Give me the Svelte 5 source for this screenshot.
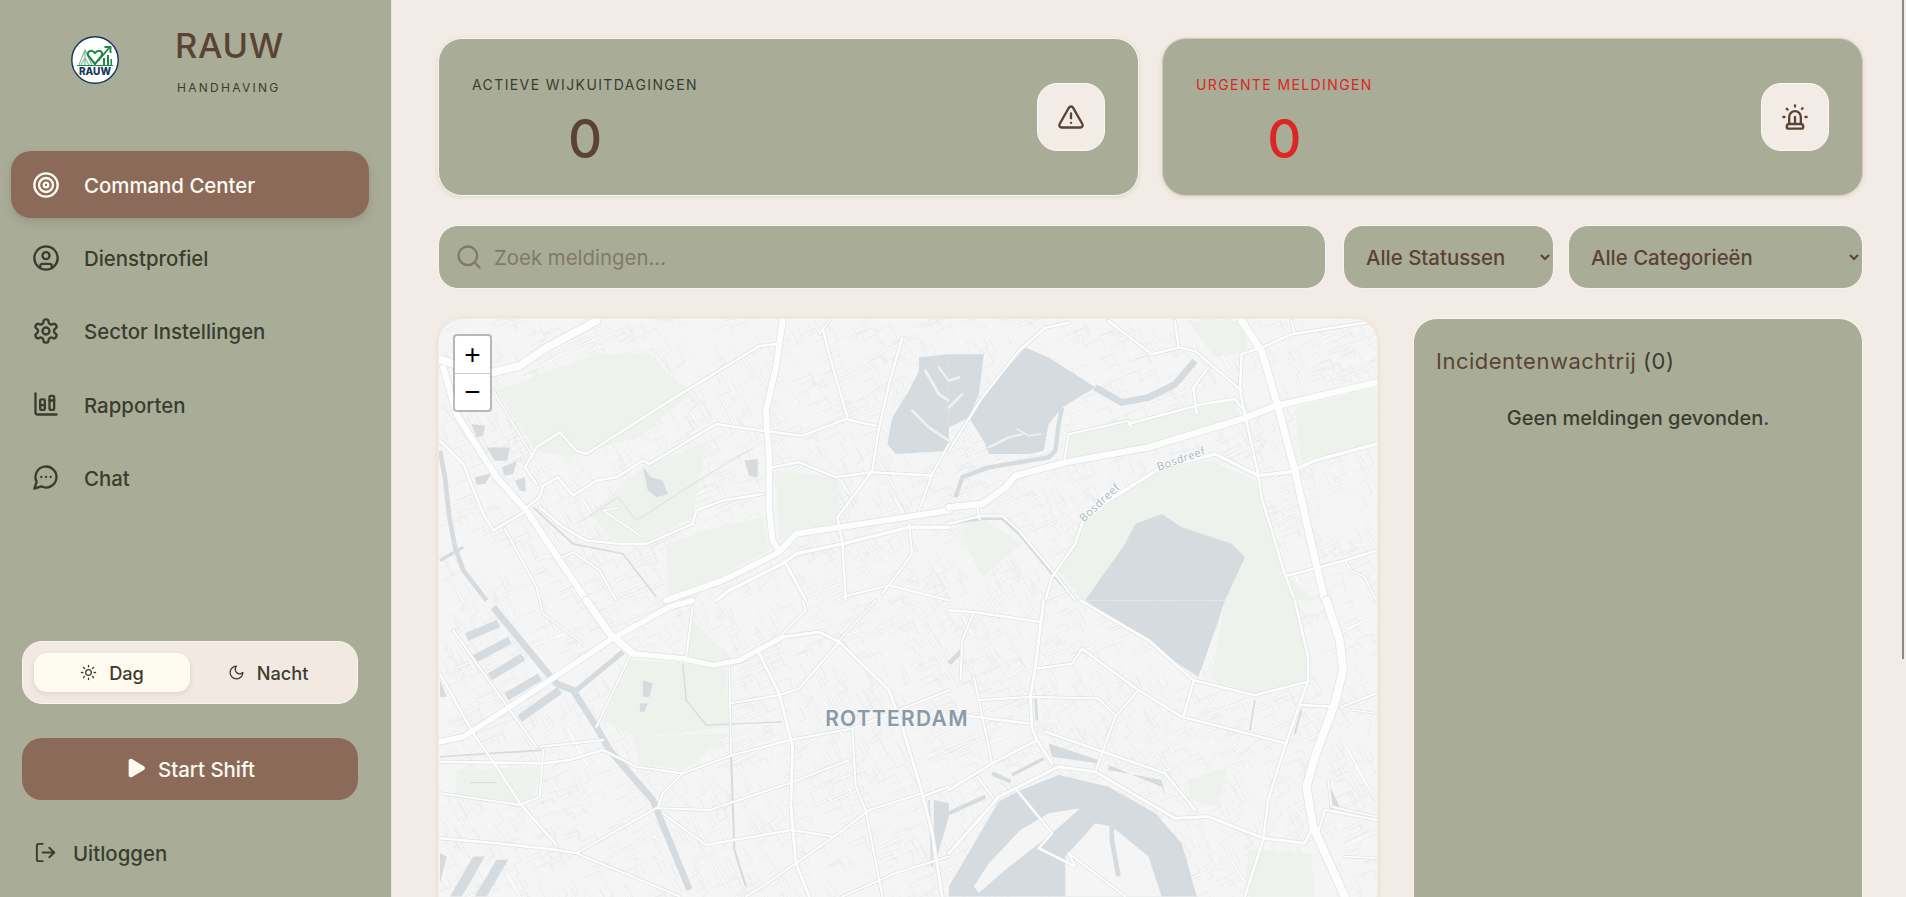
<script>
  const navItems = [
    { label: "Command Center", icon: "target", active: true },
    { label: "Dienstprofiel", icon: "user" },
    { label: "Sector Instellingen", icon: "gear" },
    { label: "Rapporten", icon: "chart" },
    { label: "Chat", icon: "chat" }
  ];

  // map features, traced per tile of the city; numbers are tile px (3x page px)
  const tiles = [
    {
      x: 430, y: 310,
      park: [
        "200,240 500,130 660,130 780,250 640,370 420,440 320,420",
        "480,610 640,470 830,395 790,620 650,690 560,690",
        "1040,480 1230,500 1225,640 1050,690",
        "710,700 830,660 1000,620 1020,720 820,820 800,870 720,870"
      ],
      water: [
        "1470,140 1560,130 1560,420 1400,430 1375,400 1390,320 1440,240 1470,180",
        "125,340 165,345 160,375 140,380",
        "170,410 240,410 232,450 195,450",
        "215,470 260,452 250,490 225,495",
        "135,500 185,488 165,520 140,522",
        "255,510 285,500 288,542 270,540",
        "640,470 665,500 700,510 715,550 680,560 655,540",
        "945,450 985,445 985,500 960,495"
      ],
      shore: [
        ["1490,180 1530,250 1560,270", 9],
        ["1450,300 1500,350 1560,390", 8],
        ["1530,170 1560,210", 7]
      ],
      ditch: [
        ["30,420 45,500 58,620 75,710 100,780 170,870", 14],
        ["30,750 100,710", 10],
        ["310,590 430,700 580,730 680,860", 5],
        ["975,410 830,495 620,630 565,560 460,630", 2.5]
      ],
      roads: [
        ["30,145 100,170 190,185 270,165 350,110 500,30", 18],
        ["40,170 80,310 200,500 290,600 470,870", 15],
        ["1060,30 1040,170 1010,300 1020,450 1020,600 1030,690 1050,720", 14],
        ["1560,600 1300,640 1100,670 1050,725 880,810 710,870", 14],
        ["1560,650 1440,650 1240,700 1100,730 1060,760 900,840 860,870", 8],
        ["1040,100 990,105 950,130 720,270 470,430 440,420 390,365 320,410 285,470 320,520", 6],
        ["860,340 1000,360 1120,375 1250,325 1340,345", 6],
        ["860,340 660,460 640,450 560,500 500,510 430,555 385,500 340,525 330,560 290,590", 6],
        ["1030,470 1110,455 1220,500 1325,485 1510,495", 6],
        ["1180,50 1200,130 1255,320", 6],
        ["1420,80 1380,220 1350,350 1330,480 1225,620 1240,700 1250,870", 6],
        ["1065,750 1130,870", 7],
        ["1440,640 1450,730 1360,850", 5],
        ["1470,600 1510,490 1560,400", 5],
        ["1000,550 880,570 800,600 790,640 650,700 570,700 470,690 400,650 330,590", 6],
        ["290,600 190,660 160,610 100,460 30,390", 6],
        ["225,655 320,830 330,870", 5],
        ["400,740 430,725 510,780 560,870", 5],
        ["190,240 310,440", 4],
        ["570,590 520,600 640,680", 4],
        ["1170,70 1200,30", 4],
        ["1240,860 1380,825 1560,870", 5]
      ]
    },
    {
      x: 950, y: 310,
      park: [
        "400,640 620,480 790,450 920,510 1010,790 1100,870 400,870 330,780 380,700",
        "720,30 880,30 900,120 800,140",
        "360,370 760,290 860,270 880,330 620,420 350,450",
        "1040,290 1285,230 1285,400 1060,450",
        "30,660 90,620 220,700 100,800"
      ],
      water: [
        "0,130 105,130 100,170 90,250 60,320 0,350",
        "230,110 300,140 440,230 340,290 300,340 285,420 240,430 120,430 110,400 60,320 100,260 140,210",
        "640,610 700,650 850,700 890,740 830,870 410,870 530,700 560,640"
      ],
      shore: [
        ["0,210 30,200", 8],
        ["0,290 40,250", 8],
        ["120,410 180,380 220,370", 7],
        ["205,355 240,375 275,370", 5],
        ["60,90 110,130", 6]
      ],
      ditch: [
        ["440,230 520,275 600,260 680,220 740,150", 20],
        ["340,290 330,340 320,420 300,440 120,470 40,500 20,560", 13],
        ["0,640 100,625 160,625 210,670 310,790 380,870", 7],
        ["940,560 1010,790", 3]
      ],
      roads: [
        ["0,590 100,580 170,530 200,495 350,455 600,410 880,325 985,285 1285,215", 15],
        ["880,30 940,120 990,290 1040,480 1090,700 1130,870", 17],
        ["400,640 430,600 640,470 800,430 860,460 930,495 1020,485 1100,450 1285,400", 8],
        ["890,310 930,490 940,560 1010,790 1040,870", 6],
        ["1285,30 1030,70 940,110 880,130 875,240 890,310", 6],
        ["540,340 760,280 860,265 880,290", 6],
        ["360,370 540,330 550,350", 5],
        ["360,370 345,460", 5],
        ["480,30 610,130 690,110 740,120 880,240", 6],
        ["780,170 735,230 745,310", 6],
        ["210,120 290,50 360,35", 6],
        ["210,120 100,260 0,420", 5],
        ["400,640 380,700 310,800 290,870", 6],
        ["0,640 100,615 160,615 210,660 310,780 380,870", 5],
        ["1285,720 1190,750 1020,795", 6],
        ["1190,750 1210,780 1250,800 1285,870", 4],
        ["85,590 92,625", 5],
        ["680,30 690,110", 5],
        ["1030,30 1040,70", 5]
      ]
    },
    {
      x: 430, y: 600,
      park: [
        "520,360 600,180 770,190 890,205 900,380 620,410",
        "780,50 920,190 840,190 770,170",
        "80,510 330,500 310,610 75,590",
        "610,410 900,400 760,510 630,490"
      ],
      water: [
        "30,760 50,770 30,850",
        "60,890 130,770 165,770 95,890",
        "135,890 200,780 235,780 170,890",
        "1515,600 1560,610 1560,650 1525,770 1515,700",
        "30,240 50,290 30,290",
        "640,240 670,250 660,290 640,290",
        "630,310 655,310 645,335 632,335"
      ],
      ditch: [
        ["190,20 350,215 380,250 430,270 500,380 540,450 600,520 670,600 690,650 780,870", 20],
        ["110,110 205,70", 24],
        ["135,175 240,120", 24],
        ["180,230 280,170", 24],
        ["230,290 330,230", 24],
        ["270,355 390,270", 24],
        ["440,270 580,155", 15],
        ["900,200 905,460 915,750 950,860", 6],
        ["760,190 770,300 830,375 1060,365", 4],
        ["120,548 200,548", 3],
        ["30,470 340,450", 5],
        ["1500,600 1510,800", 5]
      ],
      roads: [
        ["470,0 540,100 610,160", 17],
        ["610,160 760,175 850,195 930,180 1060,110", 12],
        ["1060,110 1170,95 1230,125 1380,270 1420,380 1480,580 1510,700 1540,890", 7],
        ["30,425 100,410 240,320 540,120 720,20 790,0", 13],
        ["30,220 130,400 200,500 270,610 380,735", 6],
        ["70,90 240,330 320,440", 5],
        ["30,580 270,615 330,590 340,450", 5],
        ["30,485 340,490 420,480 520,450", 6],
        ["330,440 520,420", 5],
        ["520,450 620,500 760,520 910,465 1080,420 1270,385 1560,270", 5],
        ["760,520 700,580 685,625", 5],
        ["30,715 200,730 380,750", 6],
        ["380,750 440,760 680,625", 5],
        ["685,625 840,630 1080,550 1260,480", 5],
        ["700,640 830,735 1090,690 1210,710", 5],
        ["440,760 680,860 750,890", 5],
        ["985,150 1050,280 1090,440 1085,620 1100,790 1140,890", 7],
        ["900,310 1050,285 1110,265 1230,125", 5],
        ["1060,100 1130,30 1120,0", 5],
        ["1230,120 1340,0", 4],
        ["500,380 600,170", 4],
        ["1270,390 1280,560 1310,630 1360,890", 5],
        ["1480,580 1320,630 1230,700 1100,790 1000,860 950,890", 5],
        ["1560,560 1480,590", 6],
        ["1560,770 1400,820 1240,890", 5],
        ["330,0 340,40 460,130", 4],
        ["790,20 770,170", 5],
        ["900,200 905,460", 4]
      ]
    },
    {
      x: 950, y: 600,
      park: [
        "830,0 1040,0 1080,170 1075,240 920,280 790,240",
        "720,540 840,500 810,620 720,600",
        "900,750 1090,760 1100,890 890,890"
      ],
      water: [
        "0,860 150,605 205,575 330,525 480,560 620,640 700,730 745,890 0,890",
        "410,0 830,0 800,90 750,230 660,170 620,130 500,60",
        "300,430 450,480 445,490 310,470",
        "480,495 640,560 650,590 640,540 480,510",
        "1140,550 1175,620 1145,630"
      ],
      land: [
        "75,860 120,790 215,690 300,640 395,625 310,700 260,740 170,810 90,880",
        "350,770 440,670 490,680 600,770 640,890 350,890"
      ],
      ditch: [
        ["130,520 185,545", 12],
        ["190,525 285,475", 10],
        ["0,640 110,590", 12],
        ["260,290 265,360", 8],
        ["920,300 905,390", 5],
        ["1060,330 1040,400", 6],
        ["0,190 40,150", 14],
        ["490,680 490,720 510,830", 14]
      ],
      roads: [
        ["1135,0 1175,120 1185,210 1160,310 1100,470 1075,560 1095,680 1140,780 1190,890", 19],
        ["1040,0 1080,170 1080,240 1010,440 960,600 945,720 890,890", 6],
        ["1285,280 1180,320", 5],
        ["1060,315 1160,320", 6],
        ["395,0 600,120 735,240 920,285 1075,245", 6],
        ["735,245 705,350", 6],
        ["400,145 570,270 700,350 1015,430", 6],
        ["265,205 370,190 400,145", 5],
        ["570,270 500,350 440,515", 5],
        ["285,0 260,200 245,290 250,385 265,420 310,490", 7],
        ["90,300 245,290 450,295 500,345", 5],
        ["0,340 240,370", 6],
        ["0,30 75,35 275,65", 6],
        ["75,35 40,120 35,240", 5],
        ["290,395 650,520 740,630", 6],
        ["265,420 130,490 0,570", 6],
        ["0,760 150,590 200,565 330,500 440,515 680,655 780,650 945,715 1070,730 1090,690", 7],
        ["200,565 310,700 270,745 380,800 360,760 530,890", 5],
        ["90,300 130,490", 5],
        ["75,230 90,300", 5],
        ["85,530 135,595", 5],
        ["1285,660 1130,630 1110,700", 5],
        ["1140,540 1150,620 1285,650", 4],
        ["1285,340 1180,325", 3],
        ["1190,770 1285,775", 4]
      ]
    }
  ];

  // small side streets and building blocks, the fine grain of the map
  let seed = 20240611;
  function rnd() {
    seed = (seed * 16807) % 2147483647;
    return seed / 2147483647;
  }

  function streetAngle(x, y) {
    const cell = Math.floor(x / 130) + Math.floor(y / 110);
    return (cell % 2 ? -0.42 : 1.05) + (rnd() - 0.5) * 0.12;
  }

  function grain(count, minLen, maxLen, corner) {
    let d = "";
    for (let i = 0; i < count; i++) {
      const x = 439 + rnd() * 940;
      const y = 318 + rnd() * 600;
      const a = streetAngle(x, y);
      const len = minLen + rnd() * (maxLen - minLen);
      const x2 = x + Math.cos(a) * len;
      const y2 = y + Math.sin(a) * len;
      d += `M${x.toFixed(1)} ${y.toFixed(1)}L${x2.toFixed(1)} ${y2.toFixed(1)}`;
      if (corner) {
        const s = len * 0.6;
        d += `L${(x2 - Math.sin(a) * s).toFixed(1)} ${(y2 + Math.cos(a) * s).toFixed(1)}`;
      }
    }
    return d;
  }

  const blocksPath = grain(3200, 8, 20, true);
  const sidePath = grain(420, 24, 60, false);
</script>

{#snippet navIcon(name)}
  <svg class="ico" viewBox="0 0 24 24">
    {#if name === "target"}
      <circle cx="12" cy="12" r="10" /><circle cx="12" cy="12" r="6" /><circle cx="12" cy="12" r="2" />
    {:else if name === "user"}
      <circle cx="12" cy="12" r="10" /><circle cx="12" cy="10" r="3" />
      <path d="M7 20.662V19a2 2 0 0 1 2-2h6a2 2 0 0 1 2 2v1.662" />
    {:else if name === "gear"}
      <path d="M12.22 2h-.44a2 2 0 0 0-2 2v.18a2 2 0 0 1-1 1.73l-.43.25a2 2 0 0 1-2 0l-.15-.08a2 2 0 0 0-2.73.73l-.22.38a2 2 0 0 0 .73 2.73l.15.1a2 2 0 0 1 1 1.72v.51a2 2 0 0 1-1 1.74l-.15.09a2 2 0 0 0-.73 2.73l.22.38a2 2 0 0 0 2.73.73l.15-.08a2 2 0 0 1 2 0l.43.25a2 2 0 0 1 1 1.73V20a2 2 0 0 0 2 2h.44a2 2 0 0 0 2-2v-.18a2 2 0 0 1 1-1.73l.43-.25a2 2 0 0 1 2 0l.15.08a2 2 0 0 0 2.73-.73l.22-.39a2 2 0 0 0-.73-2.73l-.15-.08a2 2 0 0 1-1-1.74v-.5a2 2 0 0 1 1-1.74l.15-.09a2 2 0 0 0 .73-2.73l-.22-.38a2 2 0 0 0-2.73-.73l-.15.08a2 2 0 0 1-2 0l-.43-.25a2 2 0 0 1-1-1.73V4a2 2 0 0 0-2-2z" />
      <circle cx="12" cy="12" r="3" />
    {:else if name === "chart"}
      <path d="M11 13H7" /><path d="M19 9h-4" /><path d="M3 3v16a2 2 0 0 0 2 2h16" />
      <rect x="15" y="5" width="4" height="12" rx="1" /><rect x="7" y="8" width="4" height="9" rx="1" />
    {:else if name === "chat"}
      <path d="M7.9 20A9 9 0 1 0 4 16.1L2 22Z" /><path d="M8 12h.01" /><path d="M12 12h.01" /><path d="M16 12h.01" />
    {/if}
  </svg>
{/snippet}

<div class="shell">
  <aside class="sidebar">
    <div class="brand">
      <svg class="logo" viewBox="0 0 48 48">
        <circle cx="24" cy="24" r="23.2" fill="#fff" stroke="#17375e" stroke-width="1.4" />
        <path d="M8 29 L14 14 L21 29 M14 14 V29 M10 29 L14 22 L18 29" fill="none" stroke="#7fb79a" stroke-width="1.1" />
        <path d="M24 28 L17.5 20 C15 16 20 12.5 24 17 C28 12.5 33 16 30.5 20 Z" fill="none" stroke="#1c8a45" stroke-width="2.1" />
        <path d="M27 25 L38 12 M33.5 11 H39.5 V17" fill="none" stroke="#1c8a45" stroke-width="1.9" />
        <path d="M32 29 V22 H34 V29 Z M36 29 V19 H38 V29 Z M39.5 29 V23 H41 V29 Z M6 29 H42 V30 H6 Z" fill="#1c8a45" />
        <text class="logo-word" x="24" y="39" text-anchor="middle">RAUW</text>
      </svg>
      <div class="brand-text">
        <h1>RAUW</h1>
        <p>HANDHAVING</p>
      </div>
    </div>

    <nav>
      {#each navItems as item}
        <button class="nav-item" class:active={item.active}>
          {@render navIcon(item.icon)}
          <span>{item.label}</span>
        </button>
      {/each}
    </nav>

    <div class="bottom">
      <div class="theme">
        <button class="theme-btn on">
          <svg class="ico small" viewBox="0 0 24 24">
            <circle cx="12" cy="12" r="4" />
            <path d="M12 2v2M12 20v2M4.93 4.93l1.41 1.41M17.66 17.66l1.41 1.41M2 12h2M20 12h2M6.34 17.66l-1.41 1.41M19.07 4.93l-1.41 1.41" />
          </svg>
          Dag
        </button>
        <button class="theme-btn">
          <svg class="ico small" viewBox="0 0 24 24"><path d="M12 3a6 6 0 0 0 9 9 9 9 0 1 1-9-9Z" /></svg>
          Nacht
        </button>
      </div>

      <button class="start">
        <svg class="play" viewBox="0 0 24 24"><path d="M4 4.2C4 2.3 6 1.2 7.6 2.2l13 8c1.5.9 1.5 3 0 3.9l-13 7.7C6 22.8 4 21.7 4 19.8Z" /></svg>
        Start Shift
      </button>

      <button class="logout">
        <svg class="ico out" viewBox="0 0 24 24">
          <path d="M9 3H5a2 2 0 0 0-2 2v14a2 2 0 0 0 2 2h4" /><path d="M16 7l5 5-5 5" /><path d="M21 12H9" />
        </svg>
        Uitloggen
      </button>
    </div>
  </aside>

  <main>
    <section class="stats">
      <div class="card">
        <div class="stat">
          <span class="label">ACTIEVE WIJKUITDAGINGEN</span>
          <span class="value">0</span>
        </div>
        <div class="badge">
          <svg class="ico" viewBox="0 0 24 24">
            <path d="m21.73 18-8-14a2 2 0 0 0-3.48 0l-8 14A2 2 0 0 0 4 21h16a2 2 0 0 0 1.73-3" /><path d="M12 9v4" /><path d="M12 17h.01" />
          </svg>
        </div>
      </div>
      <div class="card urgent">
        <div class="stat">
          <span class="label">URGENTE MELDINGEN</span>
          <span class="value">0</span>
        </div>
        <div class="badge">
          <svg class="ico" viewBox="0 0 24 24">
            <path d="M7 18v-6a5 5 0 1 1 10 0v6" />
            <path d="M5 21a1 1 0 0 0 1 1h12a1 1 0 0 0 1-1v-1a2 2 0 0 0-2-2H7a2 2 0 0 0-2 2z" />
            <path d="M21 12h1M18.5 4.5 18 5M2 12h1M12 2v1M4.929 4.929l.707.707M12 12v6" />
          </svg>
        </div>
      </div>
    </section>

    <section class="filters">
      <label class="search">
        <svg class="ico" viewBox="0 0 24 24"><circle cx="11" cy="11" r="8" /><path d="m21 21-4.3-4.3" /></svg>
        <input type="text" placeholder="Zoek meldingen..." />
      </label>
      <select class="status"><option>Alle Statussen</option></select>
      <select class="category"><option>Alle Categorieën</option></select>
    </section>

    <section class="content">
      <div class="map">
        <svg class="tiles" viewBox="439 318 940 868" preserveAspectRatio="xMinYMin slice">
          <rect x="439" y="318" width="940" height="868" fill="#f4f5f4" />
          <path d={blocksPath} fill="none" stroke="#e9eaea" stroke-width=".7" />
          <path d={sidePath} fill="none" stroke="#e4e6e5" stroke-width="2.4" />
          <path d={sidePath} fill="none" stroke="#fbfbfb" stroke-width="1.5" />
          {#each tiles as tile}
            <g transform="translate({tile.x} {tile.y}) scale(.3333)">
              {#each tile.park as p}<polygon points={p} fill="#eef2ed" />{/each}
              {#each tile.water as p}<polygon points={p} fill="#d5dbde" />{/each}
              {#each tile.land ?? [] as p}<polygon points={p} fill="#f4f5f4" />{/each}
              {#each tile.shore ?? [] as [p, w]}<polyline points={p} fill="none" stroke="#eef2ed" stroke-width={w} stroke-linecap="round" />{/each}
              {#each tile.ditch as [p, w]}<polyline points={p} fill="none" stroke="#d5dbde" stroke-width={w} stroke-linejoin="round" />{/each}
              {#each tile.roads as [p, w]}<polyline points={p} fill="none" stroke="#dfe2e2" stroke-width={w * 1.3 + 4} stroke-linejoin="round" stroke-linecap="round" />{/each}
              {#each tile.roads as [p, w]}<polyline points={p} fill="none" stroke="#fdfdfd" stroke-width={w * 1.3} stroke-linejoin="round" stroke-linecap="round" />{/each}
            </g>
          {/each}
          <text class="road-name" transform="translate(1085 522) rotate(-43)">Bosdreef</text>
          <text class="road-name" transform="translate(1160 470) rotate(-19)">Bosdreef</text>
          <text class="city" x="826" y="726">ROTTERDAM</text>
        </svg>
        <div class="zoom">
          <button>+</button>
          <button>−</button>
        </div>
      </div>

      <aside class="queue">
        <h2>Incidentenwachtrij <span>(0)</span></h2>
        <p>Geen meldingen gevonden.</p>
      </aside>
    </section>
  </main>

  <div class="scroll-thumb"></div>
</div>

<style>
  :global(body) {
    margin: 0;
    background: #f3ece6;
    color: #3a3d2e;
    font-family: "Inter", "Liberation Sans", sans-serif;
    overflow: hidden;
  }

  button, input, select {
    font: inherit;
    color: inherit;
  }

  button {
    border: 0;
    background: none;
    cursor: pointer;
  }

  .shell {
    display: flex;
    height: 100vh;
  }

  .ico {
    width: 28px;
    height: 28px;
    flex: none;
    fill: none;
    stroke: currentColor;
    stroke-width: 2;
    stroke-linecap: round;
    stroke-linejoin: round;
  }

  .ico.small {
    width: 17px;
    height: 17px;
    stroke-width: 1.8;
  }

  /* sidebar */
  .sidebar {
    width: 392px;
    flex: none;
    box-sizing: border-box;
    display: flex;
    flex-direction: column;
    background: #a9ad98;
    border-right: 1px solid #e8e4da;
    padding: 0 22px 0 11px;
  }

  .brand {
    height: 151px;
    box-sizing: border-box;
    display: flex;
    gap: 56px;
    padding: 36px 0 0 60px;
  }

  .logo {
    width: 48px;
    height: 48px;
  }

  .logo-word {
    font-size: 10px;
    font-weight: 800;
    fill: #17375e;
  }

  .brand-text h1 {
    margin: -10px 0 0;
    font-size: 34.5px;
    line-height: 40px;
    letter-spacing: .02em;
    font-weight: 500;
    color: #5b4334;
  }

  .brand-text p {
    margin: 14px 0 0 2px;
    font-size: 12px;
    line-height: 16px;
    letter-spacing: .19em;
    color: #3a3d2e;
  }

  nav {
    display: flex;
    flex-direction: column;
    gap: 6.2px;
  }

  .nav-item {
    height: 67px;
    display: flex;
    align-items: center;
    gap: 24px;
    padding: 0 21px;
    border-radius: 20px;
    font-size: 20.4px;
    font-weight: 450;
    text-align: left;
    color: #3a3d2e;
  }

  .nav-item span {
    margin-top: 2px;
  }

  .nav-item.active {
    background: #8b6a59;
    color: #fffaf2;
    box-shadow: 0 4px 10px rgba(70, 50, 40, .18);
  }

  .bottom {
    margin-top: auto;
    margin-left: 11px;
    width: 336px;
    display: flex;
    flex-direction: column;
  }

  .theme {
    height: 63px;
    box-sizing: border-box;
    padding: 11px;
    display: grid;
    grid-template-columns: 1fr 1fr;
    background: #f1e9e2;
    border: 1px solid #f8f5ee;
    border-radius: 20px;
  }

  .theme-btn {
    display: flex;
    align-items: center;
    justify-content: center;
    gap: 12px;
    border-radius: 13px;
    font-size: 18.2px;
    font-weight: 450;
  }

  .theme-btn.on {
    background: #fefbf1;
    box-shadow: 0 2px 5px rgba(80, 60, 40, .12);
  }

  .start {
    margin-top: 34px;
    height: 62px;
    display: flex;
    align-items: center;
    justify-content: center;
    gap: 11px;
    background: #8b6a59;
    color: #fffaf2;
    border-radius: 20px;
    font-size: 20.4px;
    font-weight: 500;
  }

  .play {
    width: 22px;
    height: 22px;
    fill: currentColor;
    margin-top: -3px;
  }

  .logout {
    margin: 22px 0 13px;
    height: 62px;
    padding: 0 12px;
    display: flex;
    align-items: center;
    gap: 16px;
    font-size: 20.4px;
    font-weight: 450;
    color: #3a3d2e;
  }

  .ico.out {
    width: 23px;
    height: 23px;
    margin-top: -2px;
  }

  /* main column */
  main {
    flex: 1;
    min-width: 0;
    height: 100vh;
    box-sizing: border-box;
    overflow: hidden;
    padding: 38px 43px 39px 46px;
  }

  .scroll-thumb {
    position: fixed;
    top: 0;
    right: 2px;
    width: 2px;
    height: 659px;
    background: #8c8a85;
  }

  .stats {
    display: grid;
    grid-template-columns: 701px 1fr;
    gap: 23px;
  }

  .card {
    height: 158px;
    box-sizing: border-box;
    display: flex;
    align-items: center;
    justify-content: space-between;
    padding: 0 33px;
    background: #a9ad98;
    border: 1px solid #faf6ef;
    border-radius: 24px;
    box-shadow: 0 1px 4px rgba(90, 70, 50, .14);
  }

  .card.urgent {
    border-color: #dcc6b8;
  }

  .stat {
    display: flex;
    flex-direction: column;
    align-items: center;
    gap: 15px;
    margin-top: 10px;
  }

  .label {
    font-size: 14px;
    line-height: 18px;
    letter-spacing: 1.4px;
    color: #3a3d2e;
  }

  .value {
    font-size: 53px;
    line-height: 60px;
    font-weight: 500;
    color: #5b4334;
  }

  .urgent .label, .urgent .value {
    color: #dc2626;
  }

  .badge {
    width: 68px;
    height: 68px;
    display: grid;
    place-items: center;
    background: #f3ece6;
    border: 1px solid #fbf8f2;
    box-sizing: border-box;
    border-radius: 20px;
    color: #5b4334;
  }

  .filters {
    margin-top: 29px;
    height: 64px;
    display: flex;
    gap: 14px;
  }

  .search, select {
    box-sizing: border-box;
    height: 64px;
    background: #a9ad98;
    border: 1px solid #f8f5ee;
    border-radius: 20px;
    font-size: 20px;
    color: #5b4334;
  }

  .search {
    flex: none;
    width: 888px;
    margin-right: 3px;
    display: flex;
    align-items: center;
    gap: 11px;
    padding: 0 16px;
    color: #7f7a6a;
  }

  .search input {
    flex: 1;
    min-width: 0;
    border: 0;
    outline: 0;
    background: none;
    padding: 0;
    font-size: 20.4px;
    color: #5b4334;
  }

  .search input::placeholder {
    color: #7f7a6a;
    opacity: 1;
  }

  select {
    padding: 0 6px 0 18px;
    font-size: 20.4px;
    font-weight: 450;
    outline: 0;
  }

  select.status {
    width: 211px;
  }

  select.category {
    flex: 1;
  }

  .content {
    margin-top: 29px;
    display: flex;
    gap: 35px;
    height: 868px;
  }

  .map {
    position: relative;
    width: 940px;
    flex: none;
    border-radius: 24px;
    overflow: hidden;
    border: 1px solid #f5ede0;
    box-sizing: border-box;
    box-shadow: 0 1px 4px rgba(90, 70, 50, .14);
  }

  .tiles {
    display: block;
    width: 100%;
    height: 100%;
  }

  .road-name {
    font-family: "Open Sans", sans-serif;
    font-size: 11px;
    letter-spacing: .05em;
    fill: #a9b4c0;
    paint-order: stroke;
    stroke: #fcfcfc;
    stroke-width: 2px;
  }

  .city {
    font-family: "Inter", sans-serif;
    font-size: 21px;
    font-weight: 600;
    letter-spacing: 1.3px;
    fill: #8a9aa8;
    paint-order: stroke;
    stroke: #f6f6f5;
    stroke-width: 2px;
  }

  .zoom {
    position: absolute;
    left: 14px;
    top: 15px;
    width: 39px;
    box-sizing: border-box;
    display: flex;
    flex-direction: column;
    background: #fff;
    border: 2px solid rgba(0, 0, 0, .25);
    border-radius: 4px;
    background-clip: padding-box;
  }

  .zoom button {
    height: 37px;
    padding: 0;
    font-family: "Liberation Sans", sans-serif;
    font-size: 28px;
    line-height: 36px;
    color: #000;
  }

  .zoom button + button {
    border-top: 1px solid #ccc;
  }

  .queue {
    flex: 1;
    min-width: 0;
    box-sizing: border-box;
    padding: 27px 22px;
    background: #a9ad98;
    border: 1px solid #f8f5ee;
    border-radius: 24px;
  }

  .queue h2 {
    margin: 0;
    font-size: 22px;
    line-height: 30px;
    letter-spacing: .5px;
    font-weight: 400;
    color: #5b4334;
  }

  .queue h2 span {
    color: #3a3d2e;
  }

  .queue p {
    margin: 27px 0 0;
    text-align: center;
    font-size: 20px;
    line-height: 30px;
    font-weight: 500;
    color: #3a3d2e;
  }
</style>
